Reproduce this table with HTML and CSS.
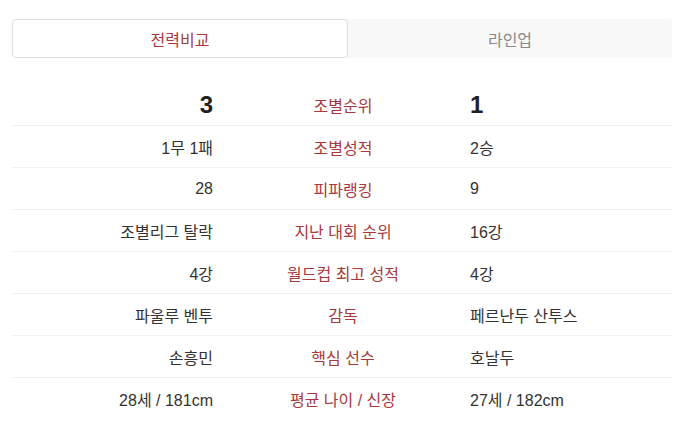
FILE: index.html
```html
<!DOCTYPE html>
<html lang="ko">
<head>
<meta charset="utf-8">
<link rel="stylesheet" href="styles.css">
</head>
<body>
<div class="page">
  <div class="tabs">
    <div class="tab active">전력비교</div>
    <div class="tab">라인업</div>
  </div>
  <div class="table">
    <div class="row big"><div class="l">3</div><div class="c">조별순위</div><div class="r">1</div></div>
    <div class="row"><div class="l">1무 1패</div><div class="c">조별성적</div><div class="r">2승</div></div>
    <div class="row"><div class="l">28</div><div class="c">피파랭킹</div><div class="r">9</div></div>
    <div class="row"><div class="l">조별리그 탈락</div><div class="c">지난 대회 순위</div><div class="r">16강</div></div>
    <div class="row"><div class="l">4강</div><div class="c">월드컵 최고 성적</div><div class="r">4강</div></div>
    <div class="row"><div class="l">파울루 벤투</div><div class="c">감독</div><div class="r">페르난두 산투스</div></div>
    <div class="row"><div class="l">손흥민</div><div class="c">핵심 선수</div><div class="r">호날두</div></div>
    <div class="row last"><div class="l">28세 / 181cm</div><div class="c">평균 나이 / 신장</div><div class="r">27세 / 182cm</div></div>
  </div>
</div>
</body>
</html>
```
FILE: styles.css
```css
html, body {
  margin: 0;
  padding: 0;
  background: #fff;
}
body {
  font-family: "Liberation Sans", "Noto Sans CJK KR", sans-serif;
  font-size: 16px;
  color: #333;
}
.page {
  padding: 19px 12px 0 12px;
}
.tabs {
  display: grid;
  grid-template-columns: 336px 1fr;
  height: 39px;
  background: #f8f8f8;
  border-radius: 4px;
}
.tab {
  display: flex;
  align-items: center;
  justify-content: center;
  color: #888;
  font-size: 16px;
}
.tab.active {
  background: #fff;
  border: 1px solid #dedede;
  border-radius: 4px;
  color: #a8383c;
}
.table {
  margin-top: 26px;
}
.row {
  display: grid;
  grid-template-columns: 220px 220px 220px;
  height: 41px;
  align-items: center;
  border-bottom: 1px solid #f1f1f1;
}
.row.last {
  border-bottom: none;
}
.l {
  text-align: right;
  padding-right: 19px;
}
.c {
  text-align: center;
  color: #a8383c;
  padding-left: 2px;
}
.r {
  text-align: left;
  padding-left: 18px;
}
.row.big .l,
.row.big .r {
  font-size: 24px;
  font-weight: bold;
  color: #222;
}
```
